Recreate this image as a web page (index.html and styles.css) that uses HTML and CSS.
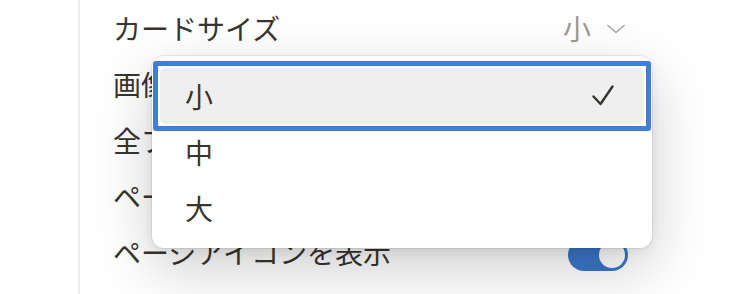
FILE: index.html
```html
<!DOCTYPE html>
<html lang="ja">
<head>
<meta charset="utf-8">
<link rel="stylesheet" href="styles.css">
</head>
<body>
<div class="page">
  <div class="panel">
    <div class="row">
      <span class="label">カードサイズ</span>
      <span class="value">小
        <svg class="chev" width="18" height="10" viewBox="0 0 18 10"><path d="M1 1.5 L9 8.5 L17 1.5" fill="none" stroke="#a8a7a4" stroke-width="1.6" stroke-linecap="round" stroke-linejoin="round"/></svg>
      </span>
    </div>
    <div class="row"><span class="label">画像を合わせる</span></div>
    <div class="row"><span class="label">全プロパティを表示</span></div>
    <div class="row"><span class="label">ページプロパティを表示</span></div>
    <div class="row">
      <span class="label">ページアイコンを表示</span>
      <span class="toggle"><span class="knob"></span></span>
    </div>
  </div>

  <div class="menu">
    <div class="focus">
      <div class="item selected">
        <span>小</span>
        <svg class="check" width="24" height="24" viewBox="0 0 24 24"><path d="M2.5 12.5 L9.5 20 L21.5 2.5" fill="none" stroke="#37352f" stroke-width="2.4" stroke-linecap="round" stroke-linejoin="round"/></svg>
      </div>
    </div>
    <div class="item"><span>中</span></div>
    <div class="item"><span>大</span></div>
  </div>
</div>
</body>
</html>
```
FILE: styles.css
```css
html, body {
  margin: 0;
  padding: 0;
  background: #ffffff;
}
body {
  width: 756px;
  height: 294px;
  overflow: hidden;
  font-family: "Noto Sans CJK JP", "Noto Sans", sans-serif;
  color: #37352f;
}
.page {
  position: relative;
  width: 756px;
  height: 294px;
}
.panel {
  margin-left: 78px;
  width: 548px;
  border-left: 2px solid #ececec;
  padding-left: 33px;
  height: 294px;
  box-sizing: border-box;
}
.row {
  height: 56px;
  display: flex;
  align-items: center;
  justify-content: space-between;
  width: 515px;
}
.label {
  font-size: 28px;
  line-height: 1;
  white-space: nowrap;
}
.value {
  display: flex;
  align-items: center;
  gap: 16px;
  font-size: 28px;
  line-height: 1;
  color: #9b9a97;
  padding-right: 3px;
}
.chev {
  display: block;
  margin-top: 2px;
}
.toggle {
  position: relative;
  width: 60px;
  height: 32px;
  border-radius: 16px;
  background: #3b77c9;
  margin-top: 6px;
}
.knob {
  position: absolute;
  right: 3px;
  top: 3px;
  width: 26px;
  height: 26px;
  border-radius: 50%;
  background: #ffffff;
}
.menu {
  position: absolute;
  left: 152px;
  top: 56px;
  width: 500px;
  height: 192px;
  box-sizing: border-box;
  padding: 12px 8px;
  background: #ffffff;
  border-radius: 12px;
  box-shadow: 0 0 0 1px rgba(0,0,0,0.06), 0 20px 60px rgba(0,0,0,0.2), 0 3px 10px rgba(0,0,0,0.07);
}
.focus {
  margin: -7px -7px -7px -7px;
  border: 5px solid #3f7fd8;
  border-radius: 3px;
  padding: 2px;
  background: #ffffff;
}
.item {
  height: 56px;
  display: flex;
  align-items: center;
  justify-content: space-between;
  padding: 0 29px 0 25px;
  font-size: 28px;
  line-height: 1;
  border-radius: 6px;
}
.item.selected {
  background: #efefef;
}
.check {
  display: block;
}
```
